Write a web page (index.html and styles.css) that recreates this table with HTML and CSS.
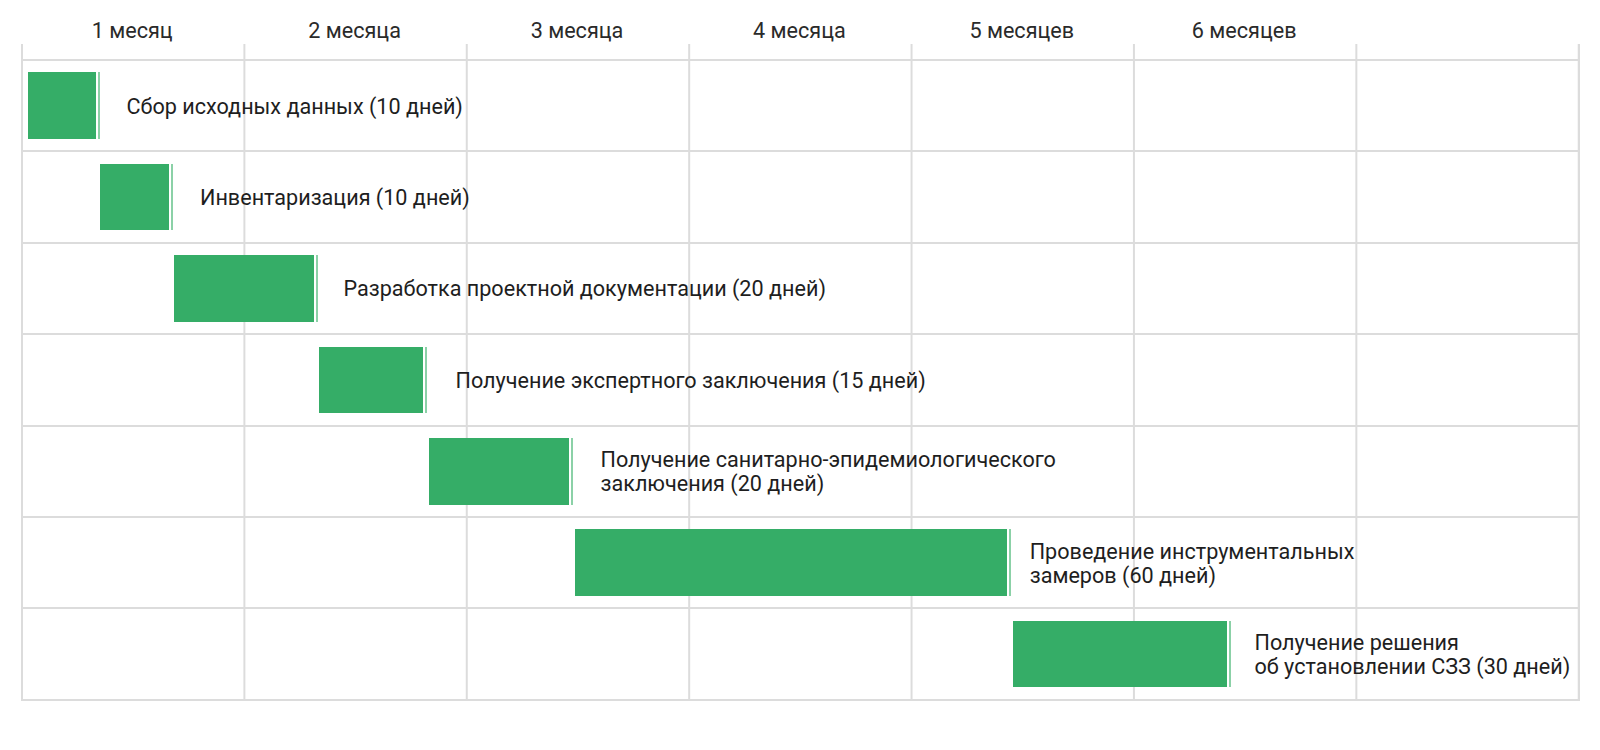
FILE: index.html
```html
<!DOCTYPE html>
<html lang="ru">
<head>
<meta charset="utf-8">
<title>График работ</title>
<link rel="stylesheet" href="styles.css">
</head>
<body>
<div class="chart">
  <div class="scale">
    <div class="tick">1 месяц</div>
    <div class="tick">2 месяца</div>
    <div class="tick">3 месяца</div>
    <div class="tick">4 месяца</div>
    <div class="tick">5 месяцев</div>
    <div class="tick">6 месяцев</div>
    <div class="tick"></div>
  </div>
  <div class="plot">
    <div class="row">
      <div class="bar" style="margin-left:6.5px;width:72px"></div>
      <div class="label" style="margin-left:27px">Сбор исходных данных (10 дней)</div>
    </div>
    <div class="row">
      <div class="bar" style="margin-left:79px;width:73px"></div>
      <div class="label" style="margin-left:27px">Инвентаризация (10 дней)</div>
    </div>
    <div class="row">
      <div class="bar" style="margin-left:152.5px;width:144px"></div>
      <div class="label" style="margin-left:26px">Разработка проектной документации (20 дней)</div>
    </div>
    <div class="row">
      <div class="bar" style="margin-left:297.5px;width:108px"></div>
      <div class="label" style="margin-left:29px">Получение экспертного заключения (15 дней)</div>
    </div>
    <div class="row">
      <div class="bar" style="margin-left:407.5px;width:144px"></div>
      <div class="label" style="margin-left:28px">Получение санитарно-эпидемиологического<br>заключения (20 дней)</div>
    </div>
    <div class="row">
      <div class="bar" style="margin-left:553.7px;width:436px"></div>
      <div class="label" style="margin-left:19px">Проведение инструментальных<br>замеров (60 дней)</div>
    </div>
    <div class="row">
      <div class="bar" style="margin-left:991.5px;width:218px"></div>
      <div class="label" style="margin-left:24px">Получение решения<br>об установлении СЗЗ (30 дней)</div>
    </div>
  </div>
</div>
</body>
</html>
```

FILE: styles.css
```css
* {
  box-sizing: border-box;
}

html, body {
  margin: 0;
  padding: 0;
  background: #ffffff;
}

body {
  font-family: Roboto, "Liberation Sans", sans-serif;
  color: #222222;
}

.chart {
  width: 1559px;
  margin-left: 21px;
}

.scale {
  display: grid;
  grid-template-columns: repeat(7, 222.4px);
  height: 44px;
}

.tick {
  text-align: center;
  font-size: 21.6px;
  line-height: 24px;
  padding-top: 19px;
  color: #2a2a2a;
}

.plot {
  padding-top: 15px;
  background-image: linear-gradient(to right, #dcdcdc 2px, transparent 2px);
  background-size: 222.4px 100%;
  background-repeat: repeat-x;
  border-right: 2px solid #dcdcdc;
}

.row {
  display: flex;
  align-items: center;
  height: 91.4px;
  border-top: 2px solid #dcdcdc;
}

.row:last-child {
  height: 93.4px;
  border-bottom: 2px solid #dcdcdc;
}

.bar {
  flex: none;
  height: 66.7px;
  background-color: #35ad67;
  background-clip: content-box;
  padding-right: 2px;
  border-right: 2px solid #8bd1a7;
}

.label {
  flex: none;
  font-size: 21.6px;
  line-height: 24px;
  padding-top: 2px;
  color: #1e1e1e;
}
```
